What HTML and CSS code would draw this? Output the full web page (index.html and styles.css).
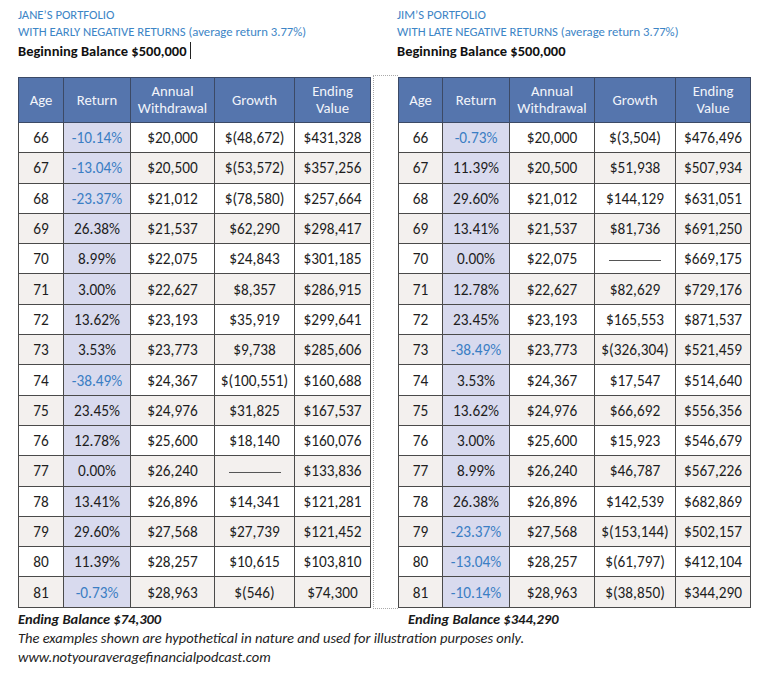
FILE: index.html
```html
<!DOCTYPE html>
<html>
<head>
<meta charset="utf-8">
<link rel="stylesheet" href="styles.css">
</head>
<body>
<div class="page">
  <div class="titles">
    <div class="title-block">
      <div class="sub">JANE’S PORTFOLIO</div>
      <div class="sub">WITH EARLY NEGATIVE RETURNS (average return 3.77%)</div>
      <div class="begin">Beginning Balance $500,000<span class="cursor"></span></div>
    </div>
    <div class="title-block right">
      <div class="sub">JIM’S PORTFOLIO</div>
      <div class="sub">WITH LATE NEGATIVE RETURNS (average return 3.77%)</div>
      <div class="begin">Beginning Balance $500,000</div>
    </div>
  </div>
  <div class="tables">
    <table class="grid left">
      <colgroup><col class="c1"><col class="c2"><col class="c3"><col class="c4"><col class="c5"></colgroup>
      <thead><tr><th>Age</th><th>Return</th><th>Annual<br>Withdrawal</th><th>Growth</th><th>Ending<br>Value</th></tr></thead>
      <tbody>
        <tr><td>66</td><td class="ret neg">-10.14%</td><td>$20,000</td><td>$(48,672)</td><td>$431,328</td></tr>
        <tr><td>67</td><td class="ret neg">-13.04%</td><td>$20,500</td><td>$(53,572)</td><td>$357,256</td></tr>
        <tr><td>68</td><td class="ret neg">-23.37%</td><td>$21,012</td><td>$(78,580)</td><td>$257,664</td></tr>
        <tr><td>69</td><td class="ret">26.38%</td><td>$21,537</td><td>$62,290</td><td>$298,417</td></tr>
        <tr><td>70</td><td class="ret">8.99%</td><td>$22,075</td><td>$24,843</td><td>$301,185</td></tr>
        <tr><td>71</td><td class="ret">3.00%</td><td>$22,627</td><td>$8,357</td><td>$286,915</td></tr>
        <tr><td>72</td><td class="ret">13.62%</td><td>$23,193</td><td>$35,919</td><td>$299,641</td></tr>
        <tr><td>73</td><td class="ret">3.53%</td><td>$23,773</td><td>$9,738</td><td>$285,606</td></tr>
        <tr><td>74</td><td class="ret neg">-38.49%</td><td>$24,367</td><td>$(100,551)</td><td>$160,688</td></tr>
        <tr><td>75</td><td class="ret">23.45%</td><td>$24,976</td><td>$31,825</td><td>$167,537</td></tr>
        <tr><td>76</td><td class="ret">12.78%</td><td>$25,600</td><td>$18,140</td><td>$160,076</td></tr>
        <tr><td>77</td><td class="ret">0.00%</td><td>$26,240</td><td><span class="dash"></span></td><td>$133,836</td></tr>
        <tr><td>78</td><td class="ret">13.41%</td><td>$26,896</td><td>$14,341</td><td>$121,281</td></tr>
        <tr><td>79</td><td class="ret">29.60%</td><td>$27,568</td><td>$27,739</td><td>$121,452</td></tr>
        <tr><td>80</td><td class="ret">11.39%</td><td>$28,257</td><td>$10,615</td><td>$103,810</td></tr>
        <tr><td>81</td><td class="ret neg">-0.73%</td><td>$28,963</td><td>$(546)</td><td>$74,300</td></tr>
      </tbody>
    </table>
    <div class="gap"></div>
    <table class="grid right">
      <colgroup><col class="d1"><col class="d2"><col class="d3"><col class="d4"><col class="d5"></colgroup>
      <thead><tr><th>Age</th><th>Return</th><th>Annual<br>Withdrawal</th><th>Growth</th><th>Ending<br>Value</th></tr></thead>
      <tbody>
        <tr><td>66</td><td class="ret neg">-0.73%</td><td>$20,000</td><td>$(3,504)</td><td>$476,496</td></tr>
        <tr><td>67</td><td class="ret">11.39%</td><td>$20,500</td><td>$51,938</td><td>$507,934</td></tr>
        <tr><td>68</td><td class="ret">29.60%</td><td>$21,012</td><td>$144,129</td><td>$631,051</td></tr>
        <tr><td>69</td><td class="ret">13.41%</td><td>$21,537</td><td>$81,736</td><td>$691,250</td></tr>
        <tr><td>70</td><td class="ret">0.00%</td><td>$22,075</td><td><span class="dash"></span></td><td>$669,175</td></tr>
        <tr><td>71</td><td class="ret">12.78%</td><td>$22,627</td><td>$82,629</td><td>$729,176</td></tr>
        <tr><td>72</td><td class="ret">23.45%</td><td>$23,193</td><td>$165,553</td><td>$871,537</td></tr>
        <tr><td>73</td><td class="ret neg">-38.49%</td><td>$23,773</td><td>$(326,304)</td><td>$521,459</td></tr>
        <tr><td>74</td><td class="ret">3.53%</td><td>$24,367</td><td>$17,547</td><td>$514,640</td></tr>
        <tr><td>75</td><td class="ret">13.62%</td><td>$24,976</td><td>$66,692</td><td>$556,356</td></tr>
        <tr><td>76</td><td class="ret">3.00%</td><td>$25,600</td><td>$15,923</td><td>$546,679</td></tr>
        <tr><td>77</td><td class="ret">8.99%</td><td>$26,240</td><td>$46,787</td><td>$567,226</td></tr>
        <tr><td>78</td><td class="ret">26.38%</td><td>$26,896</td><td>$142,539</td><td>$682,869</td></tr>
        <tr><td>79</td><td class="ret neg">-23.37%</td><td>$27,568</td><td>$(153,144)</td><td>$502,157</td></tr>
        <tr><td>80</td><td class="ret neg">-13.04%</td><td>$28,257</td><td>$(61,797)</td><td>$412,104</td></tr>
        <tr><td>81</td><td class="ret neg">-10.14%</td><td>$28,963</td><td>$(38,850)</td><td>$344,290</td></tr>
      </tbody>
    </table>
  </div>
  <div class="endings">
    <div class="end">Ending Balance $74,300</div>
    <div class="end end-right">Ending Balance $344,290</div>
  </div>
  <div class="note">The examples shown are hypothetical in nature and used for illustration purposes only.</div>
  <div class="note">www.notyouraveragefinancialpodcast.com</div>
</div>
</body>
</html>
```
FILE: styles.css
```css
html, body {
  margin: 0;
  padding: 0;
  background: #ffffff;
}
body {
  font-family: Carlito, Lato, "Liberation Sans", sans-serif;
  color: #1a1a1a;
}
.page {
  width: 768px;
  height: 674px;
  padding: 6px 0 0 18px;
  box-sizing: border-box;
}
.titles {
  display: flex;
  gap: 26px;
  height: 71px;
}
.title-block {
  width: 352px;
}
.title-block.right {
  padding-left: 1px;
}
.sub {
  color: #3d85c6;
  font-size: 12.7px;
  line-height: 17px;
}
.begin {
  font-weight: bold;
  font-size: 14.5px;
  line-height: 20px;
  margin-top: 1px;
  color: #111;
}
.cursor {
  display: inline-block;
  width: 1px;
  height: 17px;
  background: #222;
  margin-left: 3px;
  vertical-align: -3px;
}
.tables {
  display: flex;
  align-items: stretch;
}
.grid {
  border-collapse: collapse;
  table-layout: fixed;
  width: 352px;
  font-size: 15.3px;
  border: 1.5px solid #4a4a4a;
}
.c1 { width: 45px; }
.c2 { width: 67px; }
.c3 { width: 84px; }
.c4 { width: 80px; }
.c5 { width: 76px; }
.d1 { width: 44px; }
.d2 { width: 67px; }
.d3 { width: 85px; }
.d4 { width: 81px; }
.d5 { width: 75px; }
.grid th {
  background: #5575ad;
  color: #f2f4fa;
  font-weight: normal;
  height: 44px;
  padding: 0;
  line-height: 17px;
  font-size: 14.7px;
  border: 1px solid #3c4a66;
  text-align: center;
}
.grid td {
  height: 29.3px;
  padding: 0;
  text-align: center;
  border: 1px solid #4a4a4a;
  color: #1e1e1e;
  white-space: nowrap;
}
.grid tbody tr:nth-child(odd) td {
  background: #ffffff;
}
.grid tbody tr:nth-child(even) td {
  background: #f3f0ee;
}
.grid tbody tr td.ret {
  background: #d8daee;
}
.grid td.neg {
  color: #3b7ec4;
}
.dash {
  display: inline-block;
  width: 52px;
  height: 1px;
  background: #555;
  vertical-align: middle;
}
.gap {
  width: 24px;
  margin-left: 2px;
  margin-top: -2px;
  margin-bottom: -1px;
  border-top: 1px dotted #aaa;
  border-bottom: 1px dotted #aaa;
  border-left: 1px dotted #aaa;
}
.endings {
  display: flex;
  margin-top: 1px;
}
.end {
  font-weight: bold;
  font-style: italic;
  font-size: 14.5px;
  line-height: 20px;
  width: 390px;
}
.end-right {
  width: auto;
}
.note {
  font-style: italic;
  font-size: 14.5px;
  line-height: 19px;
  color: #222;
}
```
